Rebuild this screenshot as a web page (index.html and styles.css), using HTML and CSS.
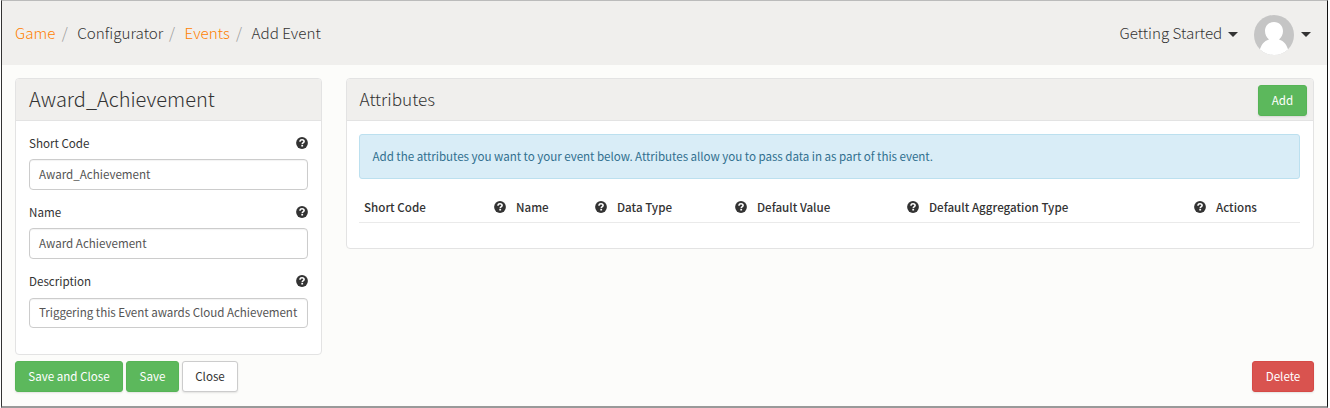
FILE: index.html
```html
<!DOCTYPE html>
<html lang="en">
<head>
<meta charset="utf-8">
<title>Add Event</title>
<link rel="stylesheet" href="styles.css">
</head>
<body>
<svg width="0" height="0" class="defs"><defs>
<symbol id="help" viewBox="0 0 12 12"><circle cx="6" cy="6" r="5.9" fill="#333"/><path d="M4 4.700C4 3.300 4.900 2.800 6 2.800s2.100.6 2.100 1.700C8.100 5.700 6.300 5.500 6.300 7" fill="none" stroke="#fff" stroke-width="1.600"/><path d="M5.300 7.800h1.800v1.700H5.300z" fill="#fff"/></symbol>
</defs></svg>
<div class="frame">
  <header class="topbar">
    <nav class="crumbs">
      <a class="c1">Game</a><i>/</i><span class="c2">Configurator</span><i>/</i><a class="c3">Events</a><i>/</i><span class="c4">Add Event</span>
    </nav>
    <div class="user">
      <span class="started">Getting Started</span><b class="caret"></b>
      <svg class="avatar" viewBox="0 0 40 40"><defs><clipPath id="round"><circle cx="20" cy="20" r="20"/></clipPath></defs><g clip-path="url(#round)"><path fill="#c5c5c5" d="M0 0h40v40H0z"/><path fill="#fff" d="M20 7c-5.500 0-9 4-9 9 0 3.500 1.500 6.500 4 8.500C10 26 7 30 5.500 36v4h29v-4c-1.500-6-4.500-10-9.500-11.500 2.500-2 4-5 4-8.500 0-5-3.500-9-9-9z"/></g></svg>
      <b class="caret"></b>
    </div>
  </header>
  <main class="content">
    <section class="panel event">
      <h1 class="panel-head"><span>Award_Achievement</span></h1>
      <form class="fields">
        <div class="label"><span>Short Code</span><svg class="help"><use href="#help"/></svg></div>
        <div class="input"><span>Award_Achievement</span></div>
        <div class="label"><span>Name</span><svg class="help"><use href="#help"/></svg></div>
        <div class="input"><span>Award Achievement</span></div>
        <div class="label last"><span>Description</span><svg class="help"><use href="#help"/></svg></div>
        <div class="input description"><span>Triggering this Event awards Cloud Achievement</span></div>
      </form>
    </section>
    <section class="panel attributes">
      <h2 class="panel-head"><span>Attributes</span><button class="btn green add">Add</button></h2>
      <p class="info"><span>Add the attributes you want to your event below. Attributes allow you to pass data in as part of this event.</span></p>
      <div class="table-head">
        <div><span>Short Code</span><svg class="help"><use href="#help"/></svg></div>
        <div><span>Name</span><svg class="help"><use href="#help"/></svg></div>
        <div><span>Data Type</span><svg class="help"><use href="#help"/></svg></div>
        <div><span>Default Value</span><svg class="help"><use href="#help"/></svg></div>
        <div><span>Default Aggregation Type</span><svg class="help"><use href="#help"/></svg></div>
        <div><span>Actions</span></div>
      </div>
    </section>
  </main>
  <footer class="actions">
    <button class="btn green save-close">Save and Close</button>
    <button class="btn green save">Save</button>
    <button class="btn plain">Close</button>
    <button class="btn red">Delete</button>
  </footer>
</div>
</body>
</html>
```
FILE: styles.css
```css
* { box-sizing: border-box; }
body { margin: 0; background: #fff; color: #333; font: 400 11.6px/18px "Noto Sans CJK SC", "Noto Sans", sans-serif; }
.defs { display: block; }
.frame { width: 1327px; height: 408px; margin-left: 1px; background: #fcfcfa; border: 1px solid #333; border-top-color: #bbb; border-bottom: 2px solid #999; border-right-color: #111; }
.topbar { height: 64px; background: #f0efed; display: flex; justify-content: space-between; padding: 0 16px 0 13px; }
.crumbs { display: flex; align-items: center; font-size: 15.2px; font-weight: 300; line-height: 22px; height: 62px; white-space: nowrap; }
.crumbs a { color: #ff7f00; }
.crumbs i { font-style: normal; color: #999; width: 22px; padding-left: 6.5px; }
.c1 { width: 40.3px; }
.c2 { width: 85.3px; }
.c3 { width: 45px; }
.user { display: flex; align-items: center; height: 68px; }
.started { font-size: 15.2px; font-weight: 300; line-height: 22px; width: 102.500px; margin-right: 6px; margin-top: -6px; white-space: nowrap; }
.caret { border: 5px solid transparent; border-top-color: #333; border-bottom: 0; width: 10px; height: 5px; margin-top: -1px; }
.avatar { width: 40px; height: 40px; margin: 0 7px 0 16px; }
.content { display: flex; align-items: flex-start; gap: 24px; padding: 13px 13px 0 13px; }
.panel { background: #fff; border: 1px solid #e3e3e3; border-radius: 4px; flex: none; }
.event { width: 307px; height: 277px; }
.attributes { width: 968px; height: 171px; }
.panel-head { margin: 0; height: 42px; background: #f0efed; border-bottom: 1px solid #e3e3e3; border-radius: 3px 3px 0 0; padding: 0 6px 2px 13px; display: flex; align-items: center; justify-content: space-between; font-size: 20px; font-weight: 300; line-height: 28px; }
.attributes .panel-head { font-size: 17.2px; padding-left: 12.5px; }
.fields { padding: 0 13px; }
.label { display: flex; justify-content: space-between; height: 38px; padding-top: 13px; }
.label.last { height: 39px; }
.help { width: 12px; height: 12px; margin-top: 2.5px; }
.input { height: 31px; border: 1px solid #ccc; border-radius: 4px; padding: 0 9px; line-height: 29px; color: #555; white-space: nowrap; box-shadow: inset 0 1px 1px #0000000d; }
.description { height: 30px; line-height: 27px; letter-spacing: -0.04px; }
.btn { height: 31px; padding: 0 0 2px; border: 1px solid; border-radius: 3px; font: 400 11.6px/18px "Noto Sans CJK SC", "Noto Sans", sans-serif; box-shadow: 0 1px 2px #0000001a; }
.green { background: #5cb85c; border-color: #56b456; color: #fff; }
.red { background: #d9534f; border-color: #d54a46; color: #fff; width: 62px; margin-left: auto; }
.plain { background: #fff; border-color: #ccc; color: #333; width: 56px; }
.add { width: 49px; margin-top: 4px; }
.save-close { width: 108px; }
.save { width: 53px; }
.info { margin: 13px 13px 0 12px; height: 45px; padding: 0 12.5px; line-height: 43px; background: #d9edf7; border: 1px solid #bce0ef; border-radius: 3px; color: #31708f; white-space: nowrap; letter-spacing: -0.04px; }
.table-head { display: grid; grid-template-columns: 152px 101px 140px 172px 287px 1fr; margin: 19px 13px 0 12px; height: 25px; border-bottom: 1px solid #eaeaea; font-weight: 500; white-space: nowrap; }
.table-head div { display: flex; justify-content: space-between; padding: 0 5px; }
.actions { display: flex; gap: 3px; padding: 6px 13px 0 13px; }
```
